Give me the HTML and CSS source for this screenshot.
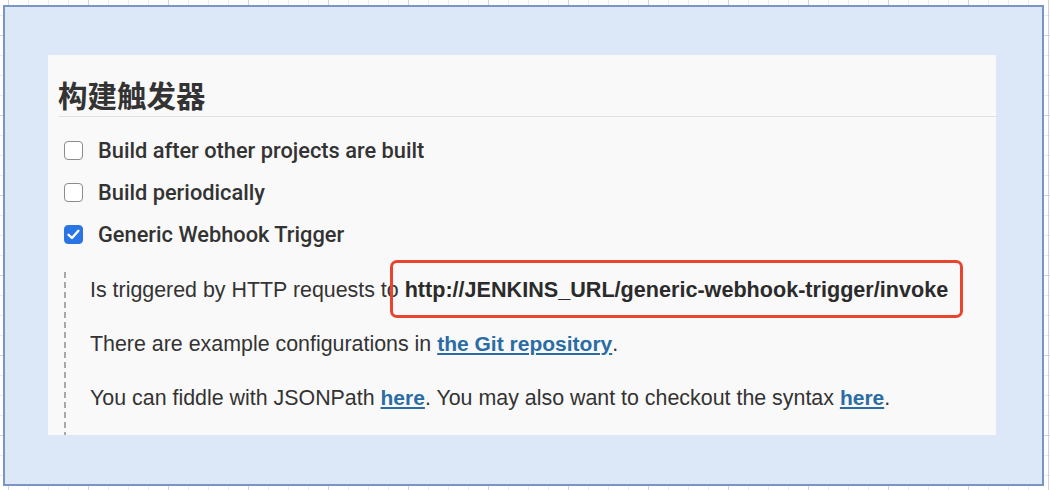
FILE: index.html
```html
<!DOCTYPE html>
<html lang="zh-CN">
<head>
<meta charset="utf-8">
<title>构建触发器</title>
<link rel="stylesheet" href="styles.css">
</head>
<body>
<div class="canvas">
  <div class="frame">
    <div class="panel">
      <h2 class="heading">构建触发器</h2>
      <div class="row">
        <span class="check"></span>
        <span class="label">Build after other projects are built</span>
      </div>
      <div class="row">
        <span class="check"></span>
        <span class="label">Build periodically</span>
      </div>
      <div class="row">
        <span class="check checked">
          <svg viewBox="0 0 19 19" width="19" height="19"><path d="M4.6 9.8 L8 13 L14.4 5.8" fill="none" stroke="#fff" stroke-width="2.4" stroke-linecap="round" stroke-linejoin="round"/></svg>
        </span>
        <span class="label">Generic Webhook Trigger</span>
      </div>
      <div class="desc">
        <p>Is triggered by HTTP requests to <b>http://JENKINS_URL/generic-webhook-trigger/invoke</b></p>
        <p>There are example configurations in <a href="#">the Git repository</a>.</p>
        <p>You can fiddle with JSONPath <a href="#">here</a>. You may also want to checkout the syntax <a href="#">here</a>.</p>
      </div>
      <div class="highlight"></div>
    </div>
  </div>
</div>
</body>
</html>
```
FILE: styles.css
```css
html, body {
  margin: 0;
  padding: 0;
}
body {
  font-family: "Liberation Sans", Arial, sans-serif;
  color: #333;
}
.canvas {
  width: 1050px;
  height: 490px;
  box-sizing: border-box;
  padding: 5px 0 0 3px;
  background-color: #fff;
  background-image:
    linear-gradient(to right, #d4d4d4 1px, transparent 1px),
    linear-gradient(to bottom, #d4d4d4 1px, transparent 1px),
    linear-gradient(to right, #ebebeb 1px, transparent 1px),
    linear-gradient(to bottom, #ebebeb 1px, transparent 1px);
  background-size: 80px 80px, 80px 80px, 20px 20px, 20px 20px;
  background-position: 8px 35px, 8px 35px, 8px 15px, 8px 15px;
  overflow: hidden;
}
.frame {
  width: 1041px;
  height: 481px;
  box-sizing: border-box;
  border: 2px solid #7a95c3;
  background: #dce7f8;
  padding: 48px 0 0 43px;
}
.panel {
  position: relative;
  width: 948px;
  height: 380px;
  background: #f9f9f9;
  overflow: hidden;
}
.heading {
  margin: 0 0 0 10px;
  padding: 21px 0 4px;
  line-height: 36px;
  font-size: 29.5px;
  font-weight: bold;
  font-family: "Noto Sans CJK SC", "Noto Sans", sans-serif;
  color: #333;
  border-bottom: 1px solid #e0e0e0;
}
.row {
  display: flex;
  align-items: center;
  height: 42px;
  margin-left: 16px;
}
.heading + .row {
  margin-top: 12px;
}
.check {
  width: 19px;
  height: 19px;
  box-sizing: border-box;
  border: 1px solid #8c8c8c;
  border-radius: 4px;
  background: #fff;
  flex: none;
  display: flex;
}
.check.checked {
  border-color: #2a74e6;
  background: #2a74e6;
}
.check svg {
  display: block;
  margin: -1px;
}
.label {
  margin-left: 15px;
  font-family: Roboto, "Liberation Sans", sans-serif;
  font-size: 21.8px;
  font-weight: 500;
  color: #333;
  line-height: 24px;
  position: relative;
  top: 1px;
}
.desc {
  margin: 17px 0 0 16px;
  padding: 5.5px 0 0 26px;
  height: 200px;
  background-image: repeating-linear-gradient(to bottom, #a9a9a9 0 6px, transparent 6px 10px);
  background-size: 2px 100%;
  background-repeat: no-repeat;
  background-position: 0 0;
  font-size: 21.4px;
}
.desc p {
  margin: 0 0 30px;
  line-height: 24px;
}
.desc b {
  font-weight: bold;
  font-size: 21.6px;
  color: #2b2b2b;
}
.desc a {
  color: #2b6ca4;
  font-weight: bold;
  font-size: 21px;
  text-decoration: underline;
  text-underline-offset: 2px;
}
.highlight {
  position: absolute;
  left: 342px;
  top: 205px;
  width: 573px;
  height: 58px;
  box-sizing: border-box;
  border: 3px solid #e8442e;
  border-radius: 7px;
}
```
